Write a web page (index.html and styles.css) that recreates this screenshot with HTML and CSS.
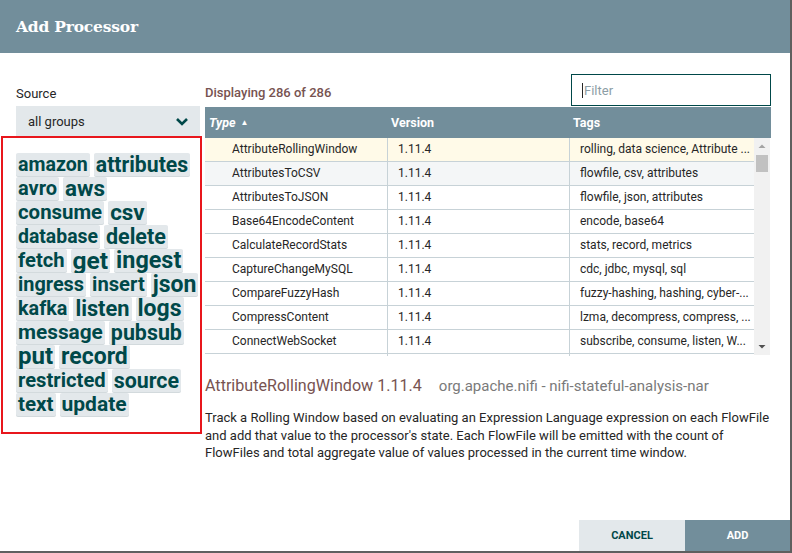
FILE: index.html
```html
<!DOCTYPE html>
<html>
<head>
<meta charset="utf-8">
<link rel="stylesheet" href="styles.css">
</head>
<body>
<div class="dialog">
  <div class="header"><span class="title">Add Processor</span></div>
  <div class="content">
    <div class="left">
      <div class="label">Source</div>
      <div class="select">
        <span>all groups</span>
        <svg class="chev" width="14" height="10" viewBox="0 0 14 10"><polyline points="2,2 7,7 12,2" fill="none" stroke="#004849" stroke-width="2.6"/></svg>
      </div>
      <div class="cloud">
        <div class="trow"><span class="tag" style="font-size:19.6px">amazon</span><span class="tag" style="font-size:21.2px">attributes</span></div>
        <div class="trow"><span class="tag" style="font-size:20px">avro</span><span class="tag" style="font-size:22.4px">aws</span></div>
        <div class="trow"><span class="tag" style="font-size:20.4px">consume</span><span class="tag" style="font-size:22.4px">csv</span></div>
        <div class="trow"><span class="tag" style="font-size:19.4px">database</span><span class="tag" style="font-size:21.5px">delete</span></div>
        <div class="trow"><span class="tag" style="font-size:20.2px">fetch</span><span class="tag" style="font-size:24.5px">get</span><span class="tag" style="font-size:23.4px">ingest</span></div>
        <div class="trow"><span class="tag" style="font-size:19.9px">ingress</span><span class="tag" style="font-size:20.2px">insert</span><span class="tag" style="font-size:23px">json</span></div>
        <div class="trow"><span class="tag" style="font-size:19.8px">kafka</span><span class="tag" style="font-size:21.8px">listen</span><span class="tag" style="font-size:23px">logs</span></div>
        <div class="trow"><span class="tag" style="font-size:20.8px">message</span><span class="tag" style="font-size:21.4px">pubsub</span></div>
        <div class="trow"><span class="tag" style="font-size:24px">put</span><span class="tag" style="font-size:23px">record</span></div>
        <div class="trow"><span class="tag" style="font-size:20.2px">restricted</span><span class="tag" style="font-size:21.4px">source</span></div>
        <div class="trow"><span class="tag" style="font-size:20.6px">text</span><span class="tag" style="font-size:21px">update</span></div>
      </div>
    </div>
    <div class="right">
      <div class="topbar">
        <div class="count">Displaying 286 of 286</div>
        <div class="filter"><span class="caret"></span><span class="ph">Filter</span></div>
      </div>
      <div class="grid">
        <div class="ghead">
          <div class="c1 hc"><span class="it">Type</span><span class="sort">&#9650;</span></div>
          <div class="c2 hc">Version</div>
          <div class="c3 hc">Tags</div>
        </div>
        <div class="gbody">
          <div class="rows">
            <div class="row sel"><div class="c1 cell">AttributeRollingWindow</div><div class="c2 cell">1.11.4</div><div class="c3 cell">rolling, data science, Attribute ...</div></div>
            <div class="row alt"><div class="c1 cell">AttributesToCSV</div><div class="c2 cell">1.11.4</div><div class="c3 cell">flowfile, csv, attributes</div></div>
            <div class="row"><div class="c1 cell">AttributesToJSON</div><div class="c2 cell">1.11.4</div><div class="c3 cell">flowfile, json, attributes</div></div>
            <div class="row"><div class="c1 cell">Base64EncodeContent</div><div class="c2 cell">1.11.4</div><div class="c3 cell">encode, base64</div></div>
            <div class="row"><div class="c1 cell">CalculateRecordStats</div><div class="c2 cell">1.11.4</div><div class="c3 cell">stats, record, metrics</div></div>
            <div class="row"><div class="c1 cell">CaptureChangeMySQL</div><div class="c2 cell">1.11.4</div><div class="c3 cell">cdc, jdbc, mysql, sql</div></div>
            <div class="row"><div class="c1 cell">CompareFuzzyHash</div><div class="c2 cell">1.11.4</div><div class="c3 cell">fuzzy-hashing, hashing, cyber-...</div></div>
            <div class="row"><div class="c1 cell">CompressContent</div><div class="c2 cell">1.11.4</div><div class="c3 cell">lzma, decompress, compress, ...</div></div>
            <div class="row"><div class="c1 cell">ConnectWebSocket</div><div class="c2 cell">1.11.4</div><div class="c3 cell">subscribe, consume, listen, W...</div></div>
            <div class="row part"><div class="c1 cell"></div><div class="c2 cell"></div><div class="c3 cell"></div></div>
          </div>
          <div class="scroll">
            <svg class="sarrow" width="16" height="16" viewBox="0 0 16 16"><polygon points="4.5,10 8,6.5 11.5,10" fill="#a3a3a3"/></svg>
            <div class="strack"><div class="thumb"></div></div>
            <svg class="sarrow" width="16" height="16" viewBox="0 0 16 16"><polygon points="4.5,6 8,9.5 11.5,6" fill="#505050"/></svg>
          </div>
        </div>
      </div>
      <div class="detail">
        <div class="dtitle"><span class="dname">AttributeRollingWindow 1.11.4</span><span class="dbundle">org.apache.nifi - nifi-stateful-analysis-nar</span></div>
        <p class="desc">Track a Rolling Window based on evaluating an Expression Language expression on each FlowFile and add that value to the processor's state. Each FlowFile will be emitted with the count of FlowFiles and total aggregate value of values processed in the current time window.</p>
      </div>
    </div>
  </div>
  <div class="footer">
    <div class="btn cancel">CANCEL</div>
    <div class="btn add">ADD</div>
  </div>
</div>
</body>
</html>
```
FILE: styles.css
```css
html, body { margin: 0; padding: 0; background: #fff; }
body { font-family: Roboto, "Liberation Sans", sans-serif; color: #262626; }
.dialog {
  width: 790px; height: 551px;
  border-right: 2px solid #5f5f5f; border-bottom: 2px solid #5f5f5f;
  display: flex; flex-direction: column; position: relative;
}
.header { height: 53px; background: #728e9b; display: flex; align-items: center; padding-left: 16px; flex: none; }
.title { font-family: "DejaVu Serif", serif; font-weight: bold; font-size: 15.5px; color: #fff; letter-spacing: -0.2px; padding-bottom: 1px; }
.content { display: flex; padding: 21px 19px 0 16px; gap: 5px; flex: 1; }
.left { width: 184px; flex: none; }
.label { height: 32px; line-height: 40px; font-size: 13px; color: #262626; }
.select { height: 31px; background: #e3e8eb; display: flex; align-items: center; justify-content: space-between; padding: 0 11px 0 12px; font-size: 13px; color: #262626; }
.chev { margin-top: 1px; }
.cloud {
  margin-left: -15px; width: 184px;
  border: 2px solid #e8161c; padding: 15px 0 15px 13px;
  margin-top: -1px;
}
.trow { display: flex; gap: 4px; height: 23px; margin-bottom: 1px; }
.tag {
  display: block; height: 23px; line-height: 23px; white-space: nowrap;
  background: #e3e8eb; color: #004849; font-weight: bold; font-size: 20.2px;
  padding: 0 2px; border-radius: 2px;
  box-shadow: 0 1px 0 #d3dadd;
}
.right { width: 566px; flex: none; }
.topbar { height: 32px; display: flex; justify-content: space-between; align-items: flex-end; }
.count { font-size: 13px; font-weight: 500; color: #775351; line-height: 15px; padding-bottom: 6px; }
.filter { height: 30px; border: 1px solid #004849; display: flex; align-items: center; padding-left: 10px; width: 188px; }
.caret { width: 1px; height: 15px; background: #262626; margin-right: 1px; }
.ph { font-size: 13px; color: #8d9ea6; }
.grid { margin-top: 1px; }
.ghead { display: flex; height: 31px; background: #728e9b; color: #fff; font-size: 12.5px; font-weight: bold; }
.hc { display: flex; align-items: center; }
.c1 { width: 183px; flex: none; box-sizing: border-box; }
.c2 { width: 182px; flex: none; box-sizing: border-box; }
.c3 { width: 184px; flex: none; box-sizing: border-box; }
.ghead .c1 { padding-left: 4px; }
.ghead .c2 { padding-left: 3px; }
.ghead .c3 { padding-left: 3px; }
.it { font-style: italic; }
.sort { font-size: 8px; margin-left: 5px; margin-top: -1px; }
.gbody { display: flex; height: 218px; overflow: hidden; }
.rows { width: 549px; flex: none; }
.row { display: flex; height: 24px; border-bottom: 1px solid #c7d2d7; box-sizing: border-box; background: #fff; }
.row.sel { background: #fffae8; }
.row.alt { background: #f4f6f7; }
.cell { font-size: 12px; line-height: 23px; color: #262626; white-space: nowrap; overflow: hidden; border-right: 1px solid #c7d2d7; }
.cell.c3 { border-right: none; padding-left: 10px; }
.cell.c1 { padding-left: 27px; }
.cell.c2 { padding-left: 10px; }
.scroll { width: 16px; flex: none; background: #f1f1f1; display: flex; flex-direction: column; height: 217px; }
.sarrow { flex: none; display: block; }
.strack { flex: 1; position: relative; }
.thumb { position: absolute; left: 2px; right: 2px; top: 1px; height: 17px; background: #c1c1c1; }
.detail { padding-top: 20px; }
.dtitle { display: flex; align-items: baseline; }
.dname { font-size: 16.1px; color: #775351; }
.dbundle { font-size: 15px; color: #7a7a7a; margin-left: 17px; }
.desc { margin: 14px 0 0; font-size: 13px; line-height: 17.5px; color: #262626; margin-right: -2px; }
.footer { position: absolute; right: 0; bottom: 0; display: flex; height: 31px; }
.btn { width: 106px; display: flex; align-items: center; justify-content: center; font-size: 11px; font-weight: bold; }
.cancel { background: #e3e8eb; color: #004849; }
.add { background: #728e9b; color: #fff; width: 105px; }
```
